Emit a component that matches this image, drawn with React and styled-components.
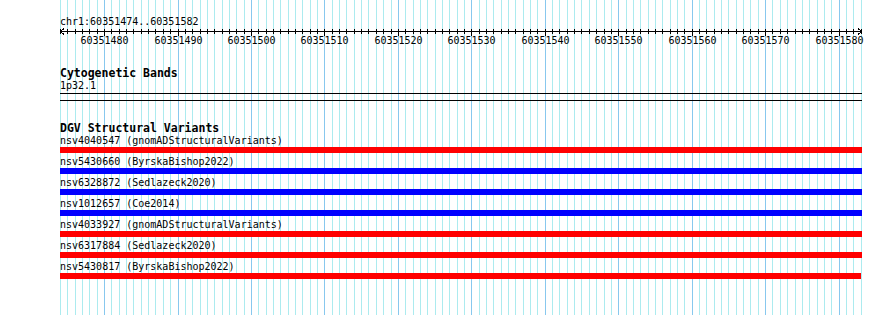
import styled, { createGlobalStyle } from "styled-components";

const START = 60351474;
const END = 60351582;
const LEFT = 60;
const PX = 7.345; // pixels per base

const GlobalStyle = createGlobalStyle`
  html, body {
    margin: 0;
    padding: 0;
    background: #fff;
  }
  body {
    font-family: "DejaVu Sans Mono", "Liberation Mono", monospace;
    color: #000;
  }
`;

const Page = styled.div`
  position: relative;
  width: 890px;
  height: 315px;
  overflow: hidden;
  background: #fff;
`;

const GridLayer = styled.svg`
  position: absolute;
  top: 0;
  left: 0;
  z-index: 0;
  pointer-events: none;
`;

const Tracks = styled.div`
  position: relative;
  z-index: 1;
  display: flex;
  flex-direction: column;
  width: 802px;
  padding: 16px 0 0 ${LEFT}px;
`;

const Location = styled.div`
  font-size: 10px;
  line-height: 12px;
  white-space: nowrap;
`;

const Ruler = styled.svg`
  display: block;
  margin-top: -1px;
  overflow: visible;
`;

const TrackTitle = styled.div`
  margin-top: ${({ $gap }) => $gap}px;
  font-size: 11.5px;
  font-weight: bold;
  line-height: 13px;
  white-space: nowrap;
`;

const Label = styled.div`
  font-size: 10px;
  line-height: 12px;
  white-space: nowrap;
`;

const Band = styled.div`
  margin-top: 1px;
  height: 6px;
  border-top: 1px solid #000;
  border-bottom: 1px solid #000;
`;

const Feature = styled.div`
  display: flex;
  flex-direction: column;
  padding-bottom: 3px;
`;

const Bar = styled.div`
  height: 6px;
  width: ${({ $w }) => $w}px;
  background: ${({ $kind }) => ($kind === "gain" ? "#0000ff" : "#ff0000")};
`;

const variants = [
  { id: "nsv4040547", src: "gnomADStructuralVariants", kind: "loss" },
  { id: "nsv5430660", src: "ByrskaBishop2022", kind: "gain" },
  { id: "nsv6328872", src: "Sedlazeck2020", kind: "gain" },
  { id: "nsv1012657", src: "Coe2014", kind: "gain" },
  { id: "nsv4033927", src: "gnomADStructuralVariants", kind: "loss" },
  { id: "nsv6317884", src: "Sedlazeck2020", kind: "loss" },
  { id: "nsv5430817", src: "ByrskaBishop2022", kind: "loss", w: 801 },
];

const xAt = (i) => Math.round(LEFT + i * PX) + 0.5;

function Grid() {
  const lines = [];
  for (let i = 0; i <= END - START + 1; i++) {
    const major = (START + i) % 10 === 0;
    lines.push(
      <line
        key={i}
        x1={xAt(i)}
        x2={xAt(i)}
        y1={0}
        y2={315}
        stroke={major ? "#88c8ee" : "#acebef"}
        strokeWidth={1}
      />
    );
  }
  return (
    <GridLayer width={890} height={315} shapeRendering="crispEdges">
      {lines}
    </GridLayer>
  );
}

function Scale() {
  const ticks = [];
  const labels = [];
  for (let i = 0; i <= END - START + 1; i++) {
    const x = xAt(i) - LEFT;
    const major = (START + i) % 10 === 0;
    ticks.push(
      <line key={i} x1={x} x2={x} y1={2} y2={major ? 9 : 7} stroke="#000" />
    );
    if (major) {
      labels.push(
        <text key={"l" + i} x={x} y={17} textAnchor="middle" fontSize="10">
          {START + i}
        </text>
      );
    }
  }
  return (
    <Ruler width={802} height={20} shapeRendering="crispEdges">
      <line x1={0} x2={802} y1={4.5} y2={4.5} stroke="#000" />
      <polyline points="4,1.5 0.5,4.5 4,7.5" fill="none" stroke="#000" />
      <polyline points="798,1.5 801.5,4.5 798,7.5" fill="none" stroke="#000" />
      {ticks}
      <g fontFamily='"DejaVu Sans Mono", monospace' fill="#000">
        {labels}
      </g>
    </Ruler>
  );
}

export default function App() {
  return (
    <Page>
      <GlobalStyle />
      <Grid />
      <Tracks>
        <Location>chr1:60351474..60351582</Location>
        <Scale />
        <TrackTitle $gap={20}>Cytogenetic Bands</TrackTitle>
        <Label>1p32.1</Label>
        <Band />
        <TrackTitle $gap={21}>DGV Structural Variants</TrackTitle>
        {variants.map((v) => (
          <Feature key={v.id}>
            <Label>
              {v.id} ({v.src})
            </Label>
            <Bar $kind={v.kind} $w={v.w || 802} />
          </Feature>
        ))}
      </Tracks>
    </Page>
  );
}
